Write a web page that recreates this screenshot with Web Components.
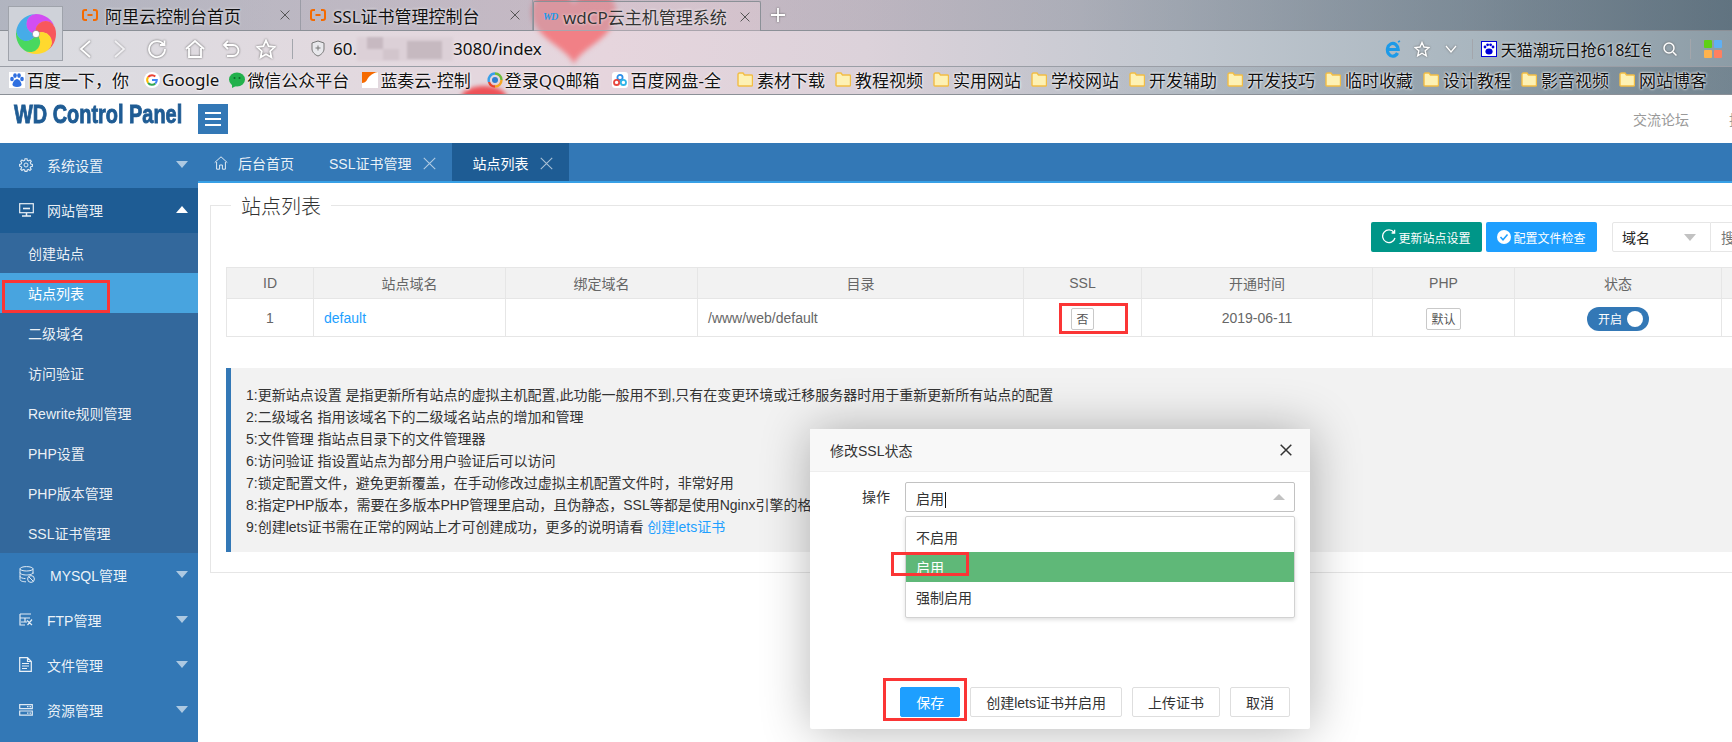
<!DOCTYPE html>
<html>
<head>
<meta charset="utf-8">
<title>wdCP</title>
<style>
  html, body { margin: 0; padding: 0; }
  body {
    width: 1732px;
    height: 742px;
    overflow: hidden;
    position: relative;
    background: #fff;
    font-family: "Liberation Sans", "Noto Sans CJK SC", sans-serif;
    font-size: 14px;
    color: #333;
  }
  notice-box a { color: #1e9fff; }
</style>
</head>
<body>

<browser-chrome>
  <browser-tab slot="tabs" icon="ali" width="228" pad="10">阿里云控制台首页</browser-tab>
  <browser-tab slot="tabs" icon="ali" width="232" pad="12">SSL证书管理控制台</browser-tab>
  <browser-tab slot="tabs" icon="wd" width="228" pad="10" active>wdCP云主机管理系统</browser-tab>

  <book-mark slot="marks" icon="baidu" style="margin-left:9px">百度一下，你</book-mark>
  <book-mark slot="marks" icon="google" style="margin-left:15px">Google</book-mark>
  <book-mark slot="marks" icon="wechat" style="margin-left:10px">微信公众平台</book-mark>
  <book-mark slot="marks" icon="lanzou" style="margin-left:13px">蓝奏云-控制</book-mark>
  <book-mark slot="marks" icon="qq" style="margin-left:16px">登录QQ邮箱</book-mark>
  <book-mark slot="marks" icon="pan" style="margin-left:13px">百度网盘-全</book-mark>
  <book-mark slot="marks" icon="folder" style="margin-left:16px">素材下载</book-mark>
  <book-mark slot="marks" icon="folder">教程视频</book-mark>
  <book-mark slot="marks" icon="folder">实用网站</book-mark>
  <book-mark slot="marks" icon="folder">学校网站</book-mark>
  <book-mark slot="marks" icon="folder">开发辅助</book-mark>
  <book-mark slot="marks" icon="folder">开发技巧</book-mark>
  <book-mark slot="marks" icon="folder">临时收藏</book-mark>
  <book-mark slot="marks" icon="folder">设计教程</book-mark>
  <book-mark slot="marks" icon="folder">影音视频</book-mark>
  <book-mark slot="marks" icon="folder">网站博客</book-mark>
</browser-chrome>

<wd-header></wd-header>

<wd-layout>
  <side-menu slot="side">
    <side-item icon="gear">系统设置</side-item>
    <side-item icon="monitor" open>网站管理</side-item>
    <side-sub>创建站点</side-sub>
    <side-sub active>站点列表</side-sub>
    <side-sub>二级域名</side-sub>
    <side-sub>访问验证</side-sub>
    <side-sub>Rewrite规则管理</side-sub>
    <side-sub>PHP设置</side-sub>
    <side-sub>PHP版本管理</side-sub>
    <side-sub>SSL证书管理</side-sub>
    <side-item icon="db" style="--tx:31px">MYSQL管理</side-item>
    <side-item icon="ftp">FTP管理</side-item>
    <side-item icon="file">文件管理</side-item>
    <side-item icon="server">资源管理</side-item>
  </side-menu>
  <tab-bar slot="tabs"></tab-bar>
  <site-panel slot="main">
    <site-table></site-table>
    <notice-box>
      <div>1:更新站点设置 是指更新所有站点的虚拟主机配置,此功能一般用不到,只有在变更环境或迁移服务器时用于重新更新所有站点的配置</div>
      <div>2:二级域名 指用该域名下的二级域名站点的增加和管理</div>
      <div>5:文件管理 指站点目录下的文件管理器</div>
      <div>6:访问验证 指设置站点为部分用户验证后可以访问</div>
      <div>7:锁定配置文件，避免更新覆盖，在手动修改过虚拟主机配置文件时，非常好用</div>
      <div>8:指定PHP版本，需要在多版本PHP管理里启动，且伪静态，SSL等都是使用Nginx引擎的格式</div>
      <div>9:创建lets证书需在正常的网站上才可创建成功，更多的说明请看 <a>创建lets证书</a></div>
    </notice-box>
  </site-panel>
</wd-layout>

<ssl-modal></ssl-modal>

<!-- red marks somebody drew on the screenshot -->
<red-box style="left:2px;top:280px;width:108px;height:33px"></red-box>
<red-box style="left:1059px;top:303px;width:69px;height:31px"></red-box>
<red-box style="left:891px;top:552px;width:78px;height:24px"></red-box>
<red-box style="left:883px;top:678px;width:84px;height:43px"></red-box>

<script>

const ICONS = {
  //browser tabs
  ali: '<svg width="16" height="12" viewBox="0 0 16 12" fill="none" stroke="#f56a00" stroke-width="2"><path d="M5 1H3Q1 1 1 3V9Q1 11 3 11H5M11 1H13Q15 1 15 3V9Q15 11 13 11H11M5.5 6H10.5"/></svg>',
  //bookmarks
  baidu: '<svg width="16" height="16" viewBox="0 0 16 16"><rect width="16" height="16" fill="#fff"/><g fill="#2f6fe0"><ellipse cx="3" cy="7" rx="1.8" ry="2.3"/><ellipse cx="6" cy="3.6" rx="1.8" ry="2.4"/><ellipse cx="10" cy="3.6" rx="1.8" ry="2.4"/><ellipse cx="13" cy="7" rx="1.8" ry="2.3"/><path d="M8 7C5.5 7 3.5 11 3.5 12.5S5 15 8 15 12.5 14 12.5 12.5 10.5 7 8 7Z"/></g></svg>',
  google: '<svg width="16" height="16" viewBox="0 0 16 16"><circle cx="8" cy="8" r="8" fill="#fff"/><path d="M8 3.2A4.8 4.8 0 0 1 11.3 4.5" fill="none" stroke="#ea4335" stroke-width="2"/><path d="M4.1 5.2A4.8 4.8 0 0 1 8 3.2" fill="none" stroke="#ea4335" stroke-width="2"/><path d="M4.1 10.8A4.8 4.8 0 0 1 4.1 5.2" fill="none" stroke="#fbbc05" stroke-width="2"/><path d="M11.3 11.5A4.8 4.8 0 0 1 4.1 10.8" fill="none" stroke="#34a853" stroke-width="2"/><path d="M8 8H12.8A4.8 4.8 0 0 1 11.3 11.5" fill="none" stroke="#4285f4" stroke-width="2"/></svg>',
  wechat: '<svg width="16" height="16" viewBox="0 0 16 16"><ellipse cx="8" cy="7.5" rx="8" ry="7" fill="#22b14c"/><path d="M3 12L3 16 7 14Z" fill="#22b14c"/><circle cx="5.5" cy="6" r="1" fill="#0d6b2a"/><circle cx="10.5" cy="6" r="1" fill="#0d6b2a"/></svg>',
  lanzou: '<svg width="16" height="16" viewBox="0 0 16 16"><rect width="16" height="16" fill="#fff"/><path d="M0 0H16C9 1 6 6 5 8 4 10 2 11 0 11Z" fill="#f56a00"/></svg>',
  qq: '<svg width="16" height="16" viewBox="0 0 16 16" fill="none" stroke-width="2.4"><path d="M8 1.5A6.5 6.5 0 0 1 14.5 8" stroke="#6dbb3a"/><path d="M14.5 8A6.5 6.5 0 0 1 8 14.5" stroke="#f5a623"/><path d="M8 14.5A6.5 6.5 0 0 1 2 10" stroke="#e8452c"/><path d="M2 10A6.5 6.5 0 0 1 8 1.5" stroke="#3aa0e8"/><circle cx="8" cy="8" r="3" fill="#2f7fd0" stroke="none"/></svg>',
  pan: '<svg width="16" height="16" viewBox="0 0 16 16"><rect width="16" height="16" rx="3" fill="#fff"/><g fill="none" stroke-width="1.8"><circle cx="8" cy="5.4" r="2.6" stroke="#2f8fe8"/><circle cx="4.6" cy="10.4" r="2.6" stroke="#e8453c"/><circle cx="11.4" cy="10.4" r="2.6" stroke="#2fb5e8"/></g></svg>',
  folder: '<svg width="16" height="15" viewBox="0 0 16 15"><path d="M1 2.5Q1 1 2.5 1H6L7.5 3H14.5Q15.5 3 15.5 4V13Q15.5 14 14.5 14H2Q1 14 1 13Z" fill="#fdf1b4" stroke="#f2bd45" stroke-width="1.4"/></svg>',
  //sidebar
  gear: '<svg width="14" height="14" viewBox="0 0 14 14" fill="none" stroke="#fff" opacity=".85"><circle cx="7" cy="7" r="2"/><path stroke-width="1.1" d="M6 .7H8L8.3 2.3 9.6 2.9 11 2 12.3 3.4 11.3 4.7 11.8 6 13.4 6.4V8.2L11.8 8.6 11.2 9.8 12.2 11.1 10.9 12.4 9.6 11.4 8.3 12 8 13.4H6L5.6 12 4.3 11.4 3 12.4 1.7 11.1 2.7 9.8 2.1 8.6 .6 8.2V6.4L2.1 6 2.7 4.7 1.7 3.4 3 2 4.3 2.9 5.7 2.3Z"/></svg>',
  monitor: '<svg width="15" height="14" viewBox="0 0 15 14" fill="none" stroke="#fff" opacity=".9"><rect x=".7" y=".7" width="13.6" height="9" stroke-width="1.2"/><path d="M4 5.5H11" stroke-width="1.6"/><path d="M3 13H12M7.5 10V13" stroke-width="1.5"/></svg>',
  db: '<svg width="16" height="17" viewBox="0 0 16 17" fill="none" stroke="#fff" opacity=".85"><ellipse cx="7.5" cy="2.8" rx="6.5" ry="2.2"/><path d="M1 2.8V13.5C1 15 4 15.8 7 15.8M14 2.8V8M1 6.5C1 8 4 9 7.5 9S14 8 14 6.5M1 10.2C1 11.6 3.5 12.5 6.5 12.6"/><circle cx="12" cy="13" r="3.4"/><path d="M10 11L14 15"/></svg>',
  ftp: '<svg width="14" height="13" viewBox="0 0 14 13" fill="none" stroke="#fff" stroke-width="1.2" opacity=".85"><path d="M1 1H12M1 5H11M1 1V12H6M6 5V9M2 9H8M8 7.5L13 12M13 6.5L8.5 12"/></svg>',
  file: '<svg width="13" height="15" viewBox="0 0 13 15" fill="none" stroke="#fff" stroke-width="1.2" opacity=".9"><path d="M.7 .7H8.5L12.3 4.5V14.3H.7ZM8.5 .7V4.5H12.3"/><path d="M3 6.5H10M3 9H10M3 11.5H8"/></svg>',
  server: '<svg width="14" height="12" viewBox="0 0 14 12" fill="none" stroke="#fff" stroke-width="1.2" opacity=".85"><path d="M.7 .7H13.3V4.6H.7ZM.7 7H13.3V11.2H.7Z"/><path d="M8 9.1H12M8 2.7H12" stroke-dasharray="1.5 1"/></svg>'
};

function cross(size, color, width){
  return `<svg width="${size}" height="${size}" viewBox="0 0 12 12" fill="none" stroke="${color}" stroke-width="${width}"><path d="M.7 .7L11.3 11.3M11.3 .7L.7 11.3"/></svg>`;
}

//Base for the small elements: subclasses only give their markup
class ShadowElement extends HTMLElement {
  constructor() {
    super(); // always call super() first in the ctor.
    this.attachShadow({mode: 'open'});
  }
  connectedCallback(){
    this.shadowRoot.innerHTML = this.render();
  }
}

class BrowserChrome extends ShadowElement {
  render(){
    const s = (w, h, inner, sw) => `<svg width="${w}" height="${h}" viewBox="0 0 ${w} ${h}" fill="none" stroke="#fff" stroke-width="${sw || 1.8}" style="filter:drop-shadow(0 0 1px #666)">${inner}</svg>`;
    return `
    <style>
      :host {
        display: block;
        position: relative;
        height: 95px;
        overflow: hidden;
        font-family: "Noto Sans", "Noto Sans CJK SC", sans-serif;
        background: linear-gradient(90deg, #dadce1 0, #e2d9df 20%, #e6d5dd 35%, #dcd2da 50%, #c2c8d0 68%, #a9b6bf 85%, #8c9ca6 100%);
      }
      #heart { position: absolute; left: 524px; top: -8px; filter: blur(2.5px); }
      #blob { position: absolute; left: 458px; top: 84px; filter: blur(2px); }
      #row1, #row2, #row3 { position: relative; display: flex; align-items: center; box-sizing: border-box; }
      #row1 {
        height: 31px;
        padding-left: 73px;
        align-items: stretch;
        border-bottom: 1px solid #8b9097;
        background: linear-gradient(90deg, rgba(120,126,146,.42) 0, rgba(120,110,130,.26) 40%, rgba(100,105,120,.3) 62%, rgba(70,90,105,.62) 100%);
      }
      #plus { display: flex; align-items: center; margin-left: 9px; }
      #row2 { height: 35px; color: #111; font-size: 17px; }
      #row3 {
        height: 29px;
        padding-bottom: 2px;
        border-top: 1px solid #9a9ea6;
        border-bottom: 1px solid #8b9097;
        background: linear-gradient(90deg, rgba(255,255,255,0) 0, rgba(255,255,255,0) 50%, rgba(70,90,105,.35) 100%);
      }
      #app {
        position: absolute; left: 8px; top: 6px;
        width: 55px; height: 55px;
        box-sizing: border-box;
        display: flex; align-items: center; justify-content: center;
        background: #cfd2d9;
        border: 1px solid #9fa3ab;
      }
      .tool { display: flex; flex: none; justify-content: center; width: 20px; }
      .sep { flex: none; width: 1px; height: 20px; background: #a3a6ac; }
      #url { display: flex; align-items: center; margin-left: 5px; white-space: nowrap; text-shadow: 0 0 3px #fff; }
      #mosaic {
        width: 96px; height: 24px;
        background:
          linear-gradient(#c7b9c1, #c7b9c1) 10px 0/16px 12px no-repeat,
          linear-gradient(#d2c5cc, #d2c5cc) 26px 12px/16px 11px no-repeat,
          linear-gradient(#c6b9c0, #c6b9c0) 50px 4px/35px 18px no-repeat,
          #dcd0d7;
        filter: blur(1px);
      }
      #search {
        flex: none; width: 150px;
        white-space: nowrap; overflow: hidden;
        font-size: 16px; text-shadow: 0 0 3px #fff;
      }
    </style>
    <svg id="heart" width="100" height="80" viewBox="0 0 100 80"><path d="M50 72C44 56 8 46 8 20 8 6 18 0 30 0 40 0 47 6 50 12 53 6 60 0 70 0 82 0 92 6 92 20 92 46 56 56 50 72Z" fill="#f2787e" opacity=".92"/></svg>
    <svg id="blob" width="52" height="24"><ellipse cx="26" cy="14" rx="23" ry="12" fill="#ee5157"/></svg>
    <div id="row1"><slot name="tabs"></slot><div id="plus">${s(16, 16, '<path d="M8 1V15M1 8H15"/>', 1.8)}</div></div>
    <div id="row2">
      <div class="tool" style="margin-left:75px">${s(14, 20, '<path d="M12 2L3 10 12 18"/>')}</div>
      <div class="tool" style="margin-left:15px;opacity:.6">${s(14, 20, '<path d="M2 2L11 10 2 18"/>')}</div>
      <div class="tool" style="margin-left:17px">${s(20, 20, '<path d="M16.5 5.5A8 8 0 1 0 18 10M17.5 1.5V6H13"/>')}</div>
      <div class="tool" style="margin-left:18px">${s(20, 20, '<path d="M1 10L10 2 19 10M4 9V18H16V9"/>')}</div>
      <div class="tool" style="margin-left:16px">${s(18, 20, '<path d="M6 2L2 6 6 10M2 6H11A5.5 5.5 0 0 1 11 17H5"/>')}</div>
      <div class="tool" style="margin-left:15px">${s(20, 20, '<path d="M10 1.5L12.6 7.2 18.8 8 14.2 12.2 15.4 18.4 10 15.3 4.6 18.4 5.8 12.2 1.2 8 7.4 7.2Z"/>')}</div>
      <div class="sep" style="margin-left:16px"></div>
      <div class="tool" style="margin-left:15px"><svg width="14" height="17" viewBox="0 0 14 17" fill="none" stroke="#777"><path d="M7 1L13 3V9C13 12 10 15 7 16 4 15 1 12 1 9V3Z" fill="#e8e8ec"/><path d="M4.5 8H9.5M7 5.5V10.5"/></svg></div>
      <div id="url">60.<div id="mosaic"></div>3080/index</div>
      <div class="tool" style="margin-left:841px"><svg width="16" height="18" viewBox="0 0 16 18" fill="none" stroke="#1c9ae8" stroke-width="3.2"><path d="M2.5 9.5H13.2A5.4 6.4 0 1 0 12.5 13"/><path d="M13 2L15 1" stroke-width="1.4"/></svg></div>
      <div class="tool" style="margin-left:9px">${s(16, 16, '<path d="M8 1.5L10 6 15 6.5 11.2 9.8 12.3 14.8 8 12.2 3.7 14.8 4.8 9.8 1 6.5 6 6Z"/>', 1.4)}</div>
      <div class="tool" style="margin-left:9px">${s(12, 8, '<path d="M1 1L6 7 11 1"/>', 1.3)}</div>
      <div class="sep" style="margin-left:11px"></div>
      <div class="tool" style="margin-left:6px"><svg width="16" height="16" viewBox="0 0 16 16"><rect width="16" height="16" fill="#0000d8"/><rect x="1" y="1" width="14" height="14" fill="#fff"/><g fill="#0000d8"><circle cx="4" cy="6" r="1.4"/><circle cx="6.6" cy="3.8" r="1.4"/><circle cx="9.6" cy="3.8" r="1.4"/><circle cx="12" cy="6" r="1.4"/><ellipse cx="8" cy="10.5" rx="3.6" ry="3"/></g></svg></div>
      <div id="search" style="margin-left:2px">天猫潮玩日抢618红包</div>
      <div class="tool" style="margin-left:9px">${s(16, 16, '<circle cx="7" cy="7" r="5"/><path d="M11 11L14.5 14.5"/>', 1.5)}</div>
      <div class="sep" style="margin-left:10px"></div>
      <div class="tool" style="margin-left:12px"><svg width="18" height="18" viewBox="0 0 18 18"><rect width="8" height="8" rx="1" fill="#5fd017"/><rect x="10" width="8" height="8" rx="1" fill="#5fb0f5"/><rect y="10" width="8" height="8" rx="1" fill="#ffb34d"/><rect x="10" y="10" width="8" height="8" rx="1" fill="#ff8060"/></svg></div>
    </div>
    <div id="row3"><slot name="marks"></slot></div>
    <div id="app">
      <svg width="42" height="42" viewBox="-21 -21 42 42">
        ${['#d24ef2','#f8575d','#ffd92e','#49d85f','#46ace8'].map((c, i) =>
          `<path transform="rotate(${i * 72})" d="M0 0A10 10 0 0 1 0 -20A20 20 0 0 1 19 -6.2A10 10 0 0 0 0 0Z" fill="${c}"/>`).join('')}
        <circle r="3.6" fill="#fff" stroke="#555" stroke-width=".4"/>
      </svg>
    </div>`;
  }
}

class BrowserTab extends ShadowElement {
  render(){
    const active = this.hasAttribute('active');
    const icon = this.getAttribute('icon') == 'wd'
      ? '<span style="width:16px;font:italic bold 10px \'Liberation Serif\',serif;color:#1c9ae8;letter-spacing:-1px">WD</span>'
      : ICONS.ali;
    return `
    <style>
      :host {
        display: flex; align-items: center; box-sizing: border-box; flex: none;
        width: ${this.getAttribute('width')}px;
        padding: 0 ${this.getAttribute('pad')}px 0 9px;
        margin-top: ${active ? '1px' : '0'};
        font-size: 17px;
        color: ${active ? '#333' : '#111'};
        white-space: nowrap;
        ${active
          ? 'background: rgba(255,226,232,.26); border: 1px solid #8b9097; border-bottom: none; border-radius: 2px 2px 0 0; margin-bottom:-1px;'
          : 'border-right: 1px solid #9b9ca6;'}
      }
      #t { margin-left: ${active ? '4px' : '7px'}; text-shadow: 0 0 3px #fff; }
      #x { margin-left: auto; display: flex; }
    </style>
    ${icon}<span id="t"><slot></slot></span><span id="x">${cross(10, '#555', 1.2)}</span>`;
  }
}

class BookMark extends ShadowElement {
  render(){
    const folder = this.getAttribute('icon') == 'folder';
    return `
    <style>
      :host {
        display: flex; align-items: center; flex: none;
        gap: ${folder ? 4 : 2}px;
        ${folder ? 'width: 88px; margin-right: 10px;' : ''}
        font-size: 17px;
        color: #111;
        white-space: nowrap;
        text-shadow: 0 0 3px #fff, 0 0 2px #fff;
      }
      svg { flex: none; }
    </style>
    ${ICONS[this.getAttribute('icon')]}<slot></slot>`;
  }
}

class WdHeader extends ShadowElement {
  render(){
    return `
    <style>
      :host { display: flex; align-items: center; height: 48px; background: #fff; }
      #logo { flex: none; width: 198px; height: 48px; display: flex; align-items: center; padding-bottom: 9px; box-sizing: border-box; }
      #logo span {
        display: inline-block; margin-left: 14px;
        font: bold 26px "Liberation Sans", sans-serif;
        color: #1f5c94;
        -webkit-text-stroke: .9px #1f5c94;
        transform: scaleX(.766);
        transform-origin: left center;
        white-space: nowrap;
      }
      #menu {
        flex: none; width: 30px; height: 30px; margin-top: -1px;
        background: #3378b6;
        display: flex; flex-direction: column; justify-content: center; gap: 4px; align-items: center;
      }
      #menu i { display: block; width: 16px; height: 2px; background: #fff; }
      #links { display: flex; gap: 40px; margin-left: 1405px; color: #999; font-size: 14px; white-space: nowrap; margin-top: -1px; }
    </style>
    <div id="logo"><span>WD Control Panel</span></div>
    <div id="menu"><i></i><i></i><i></i></div>
    <div id="links"><span>交流论坛</span><span>技术支持</span></div>`;
  }
}

class WdLayout extends ShadowElement {
  render(){
    return `
    <style>
      :host { display: grid; grid-template-columns: 198px 1534px; grid-template-rows: 40px 559px; height: 599px; overflow: hidden; }
      #s { grid-row: 1 / 3; overflow: hidden; }
      #m { overflow: hidden; }
    </style>
    <div id="s"><slot name="side"></slot></div>
    <div><slot name="tabs"></slot></div>
    <div id="m"><slot name="main"></slot></div>`;
  }
}

class SideMenu extends ShadowElement {
  render(){
    return `
    <style>
      :host { display: block; height: 599px; background: #3378b6; color: #fff; font-size: 14px; }
    </style>
    <slot></slot>`;
  }
}

class SideItem extends ShadowElement {
  render(){
    const open = this.hasAttribute('open');
    return `
    <style>
      :host {
        display: flex; align-items: center;
        height: 45px; box-sizing: border-box;
        padding: 0 10px 2px 19px;
        color: rgba(255,255,255,.92);
        ${open ? 'background: #1e5c94;' : ''}
      }
      #i { flex: none; width: var(--tx, 28px); display: flex; align-items: center; }
      #a { margin-left: auto; width: 0; height: 0; border: 6px solid transparent; border-bottom-width: 0; border-top: 7px solid rgba(255,255,255,.6); }
      :host([open]) #a { border-top: 0; border-bottom: 7px solid #fff; }
    </style>
    <div id="i">${ICONS[this.getAttribute('icon')]}</div><slot></slot><div id="a"></div>`;
  }
}

class SideSub extends ShadowElement {
  render(){
    return `
    <style>
      :host {
        display: flex; align-items: center;
        height: 40px;
        padding-left: 28px;
        background: #33689c;
        color: rgba(255,255,255,.92);
      }
      :host([active]) { background: #48a4df; color: #fff; }
    </style>
    <slot></slot>`;
  }
}

class TabBar extends ShadowElement {
  render(){
    const x = `<span style="display:flex;margin-left:12px">${cross(13, 'rgba(255,255,255,.62)', 1)}</span>`;
    return `
    <style>
      :host {
        display: flex; height: 40px; box-sizing: border-box;
        background: #3378b6;
        border-bottom: 2px solid #38a0e6;
        color: rgba(255,255,255,.92);
        font-size: 14px;
        white-space: nowrap;
      }
      .t { display: flex; align-items: center; padding: 2px 16px 0 20px; }
      .on { background: #1e5c94; color: #fff; }
      svg.h { margin-right: 10px; }
    </style>
    <div class="t" style="padding:2px 15px 0 16px">
      <svg class="h" width="14" height="14" viewBox="0 0 14 14" fill="none" stroke="#fff" opacity=".85"><path d="M.7 6.6L7 .8 13.3 6.6M2.6 6V13.2H5.6V9H8.4V13.2H11.4V6"/></svg>
      后台首页
    </div>
    <div class="t">SSL证书管理${x}</div>
    <div class="t on">站点列表${x}</div>`;
  }
}

class SitePanel extends ShadowElement {
  render(){
    return `
    <style>
      :host { display: block; padding-left: 12px; width: 1600px; }
      fieldset {
        margin: 6px 0 0;
        padding: 0 0 20px;
        border: 1px solid #e6e6e6;
        min-width: 0;
      }
      legend {
        margin-left: 20px; padding: 4px 10px 0;
        font-size: 20px; font-weight: 300; line-height: 28px;
        color: #333;
      }
      #bar { display: flex; height: 30px; margin: 1px 0 15px 1160px; }
      .b {
        flex: none; display: flex; align-items: center; justify-content: center; gap: 2px;
        width: 111px; height: 30px; box-sizing: border-box;
        border-radius: 2px; color: #fff; font-size: 12px; white-space: nowrap;
      }
      #sel {
        flex: none; width: 99px; height: 30px; margin-left: 15px; box-sizing: border-box;
        border: 1px solid #e6e6e6; border-radius: 2px 0 0 2px;
        display: flex; align-items: center; justify-content: space-between;
        padding: 0 14px 0 9px; color: #222; font-size: 14px;
      }
      #sel i { width: 0; height: 0; border: 6px solid transparent; border-bottom-width: 0; border-top: 7px solid #c2c2c2; }
      #in {
        flex: none; width: 100px; height: 30px; box-sizing: border-box;
        border: 1px solid #e6e6e6; border-left: 0;
        display: flex; align-items: center; padding-left: 10px; color: #757575; font-size: 14px;
      }
      ::slotted(site-table) { margin-left: 15px; }
    </style>
    <fieldset>
      <legend>站点列表</legend>
      <div id="bar">
        <div class="b" style="background:#009688">
          <svg width="14" height="16" viewBox="0 0 14 16" fill="none" stroke="#fff" stroke-width="1.3"><path d="M12 3.5A6.3 6.3 0 1 0 13 9M12.6 .8V4H9.6"/></svg>更新站点设置
        </div>
        <div class="b" style="background:#1e9fff;margin-left:4px">
          <svg width="14" height="14" viewBox="0 0 14 14"><circle cx="7" cy="7" r="7" fill="#fff"/><path d="M3.5 7L6 9.8 10.5 4.5" fill="none" stroke="#1e9fff" stroke-width="1.5"/></svg>配置文件检查
        </div>
        <div id="sel"><span>域名</span><i></i></div>
        <div id="in">搜索</div>
      </div>
      <slot></slot>
    </fieldset>`;
  }
}

class SiteTable extends ShadowElement {
  render(){
    const heads = ['ID', '站点域名', '绑定域名', '目录', 'SSL', '开通时间', 'PHP', '状态', '操作'];
    const widths = [87, 192, 192, 326, 118, 231, 142, 207, 60];
    return `
    <style>
      :host { display: block; width: 1555px; }
      table { border-collapse: collapse; table-layout: fixed; width: 1555px; font-size: 14px; color: #666; }
      th, td { border: 1px solid #e6e6e6; padding: 0 10px; text-align: center; }
      th { height: 30px; background: #f2f2f2; font-weight: 400; }
      td { height: 37px; }
      .l { text-align: left; }
      a { color: #1e9fff; }
      .btn {
        display: inline-flex; align-items: center; justify-content: center;
        height: 22px; padding: 0 4px; box-sizing: border-box;
        border: 1px solid #c9c9c9; border-radius: 2px;
        font-size: 12px; color: #555; vertical-align: middle; margin-top: 2px;
      }
      .sw {
        display: inline-flex; align-items: center; justify-content: space-between;
        width: 62px; height: 24px; box-sizing: border-box; padding: 0 6px 0 11px;
        border-radius: 12px; background: #3378b6; color: #fff; font-size: 12px;
        vertical-align: middle; margin-top: 2px;
      }
      .sw i { width: 16px; height: 16px; border-radius: 50%; background: #fff; }
    </style>
    <table>
      <colgroup>${widths.map(w => `<col style="width:${w}px">`).join('')}</colgroup>
      <tr>${heads.map(h => `<th>${h}</th>`).join('')}</tr>
      <tr>
        <td>1</td>
        <td class="l"><a>default</a></td>
        <td></td>
        <td class="l">/www/web/default</td>
        <td><span class="btn">否</span></td>
        <td>2019-06-11</td>
        <td><span class="btn">默认</span></td>
        <td><span class="sw">开启<i></i></span></td>
        <td></td>
      </tr>
    </table>`;
  }
}

class NoticeBox extends ShadowElement {
  render(){
    return `
    <style>
      :host {
        display: block;
        margin: 31px 0 0 15px;
        padding: 16px 0 14px 15px;
        border-left: 5px solid #3378b6;
        background: #f2f2f2;
        font-size: 14px;
        line-height: 22px;
        color: #333;
        white-space: nowrap;
      }
      ::slotted(div) { height: 22px; }
    </style>
    <slot></slot>`;
  }
}

class SslModal extends ShadowElement {
  render(){
    return `
    <style>
      :host {
        position: absolute; left: 810px; top: 429px;
        display: flex; flex-direction: column;
        width: 500px; height: 300px;
        background: #fff; border-radius: 2px;
        box-shadow: 1px 1px 50px rgba(0,0,0,.3);
        font-size: 14px; color: #333;
        z-index: 5;
      }
      #head {
        flex: none; height: 43px; box-sizing: border-box;
        display: flex; align-items: center; justify-content: space-between;
        padding: 0 18px 0 20px;
        background: #f8f8f8; border-bottom: 1px solid #eee;
      }
      #body { position: relative; flex: 1; }
      #row { display: flex; align-items: center; padding-top: 10px; }
      #row label { width: 80px; text-align: right; margin-right: 15px; margin-top: -3px; }
      #input {
        width: 390px; height: 30px; box-sizing: border-box;
        border: 1px solid #c2c2c2; border-radius: 2px;
        display: flex; align-items: center; justify-content: space-between;
        padding: 2px 10px 0;
      }
      #input b { width: 1px; height: 16px; background: #111; display: inline-block; vertical-align: middle; margin-left: 1px; }
      #input i { width: 0; height: 0; border: 6px solid transparent; border-top-width: 0; border-bottom: 6px solid #c2c2c2; margin: -3px -1px 0 0; }
      #drop {
        position: absolute; left: 95px; top: 44px;
        width: 390px; box-sizing: border-box;
        padding: 5px 0;
        background: #fff; border: 1px solid #d2d2d2; border-radius: 2px;
        box-shadow: 0 2px 4px rgba(0,0,0,.12);
      }
      #drop div { height: 30px; line-height: 32px; padding-left: 10px; }
      #drop .on { background: #5fb878; color: #fff; }
      #foot { flex: none; display: flex; justify-content: flex-end; gap: 10px; padding: 0 20px 12px; }
      .btn {
        height: 30px; box-sizing: border-box; padding: 0 15px;
        border: 1px solid #dedede; border-radius: 2px;
        display: flex; align-items: center; white-space: nowrap;
      }
      .pri { background: #1e9fff; border-color: #1e9fff; color: #fff; }
    </style>
    <div id="head"><span>修改SSL状态</span>${cross(12, '#333', 1.5)}</div>
    <div id="body">
      <div id="row"><label>操作</label><div id="input"><span>启用<b></b></span><i></i></div></div>
      <div id="drop"><div>不启用</div><div class="on">启用</div><div>强制启用</div></div>
    </div>
    <div id="foot">
      <div class="btn pri">保存</div>
      <div class="btn">创建lets证书并启用</div>
      <div class="btn">上传证书</div>
      <div class="btn">取消</div>
    </div>`;
  }
}

class RedBox extends ShadowElement {
  render(){
    return `
    <style>
      :host { position: absolute; box-sizing: border-box; border: 3px solid #fb3535; z-index: 6; }
    </style>`;
  }
}

customElements.define('browser-chrome', BrowserChrome);
customElements.define('browser-tab', BrowserTab);
customElements.define('book-mark', BookMark);
customElements.define('wd-header', WdHeader);
customElements.define('wd-layout', WdLayout);
customElements.define('side-menu', SideMenu);
customElements.define('side-item', SideItem);
customElements.define('side-sub', SideSub);
customElements.define('tab-bar', TabBar);
customElements.define('site-panel', SitePanel);
customElements.define('site-table', SiteTable);
customElements.define('notice-box', NoticeBox);
customElements.define('ssl-modal', SslModal);
customElements.define('red-box', RedBox);

</script>
</body>
</html>
